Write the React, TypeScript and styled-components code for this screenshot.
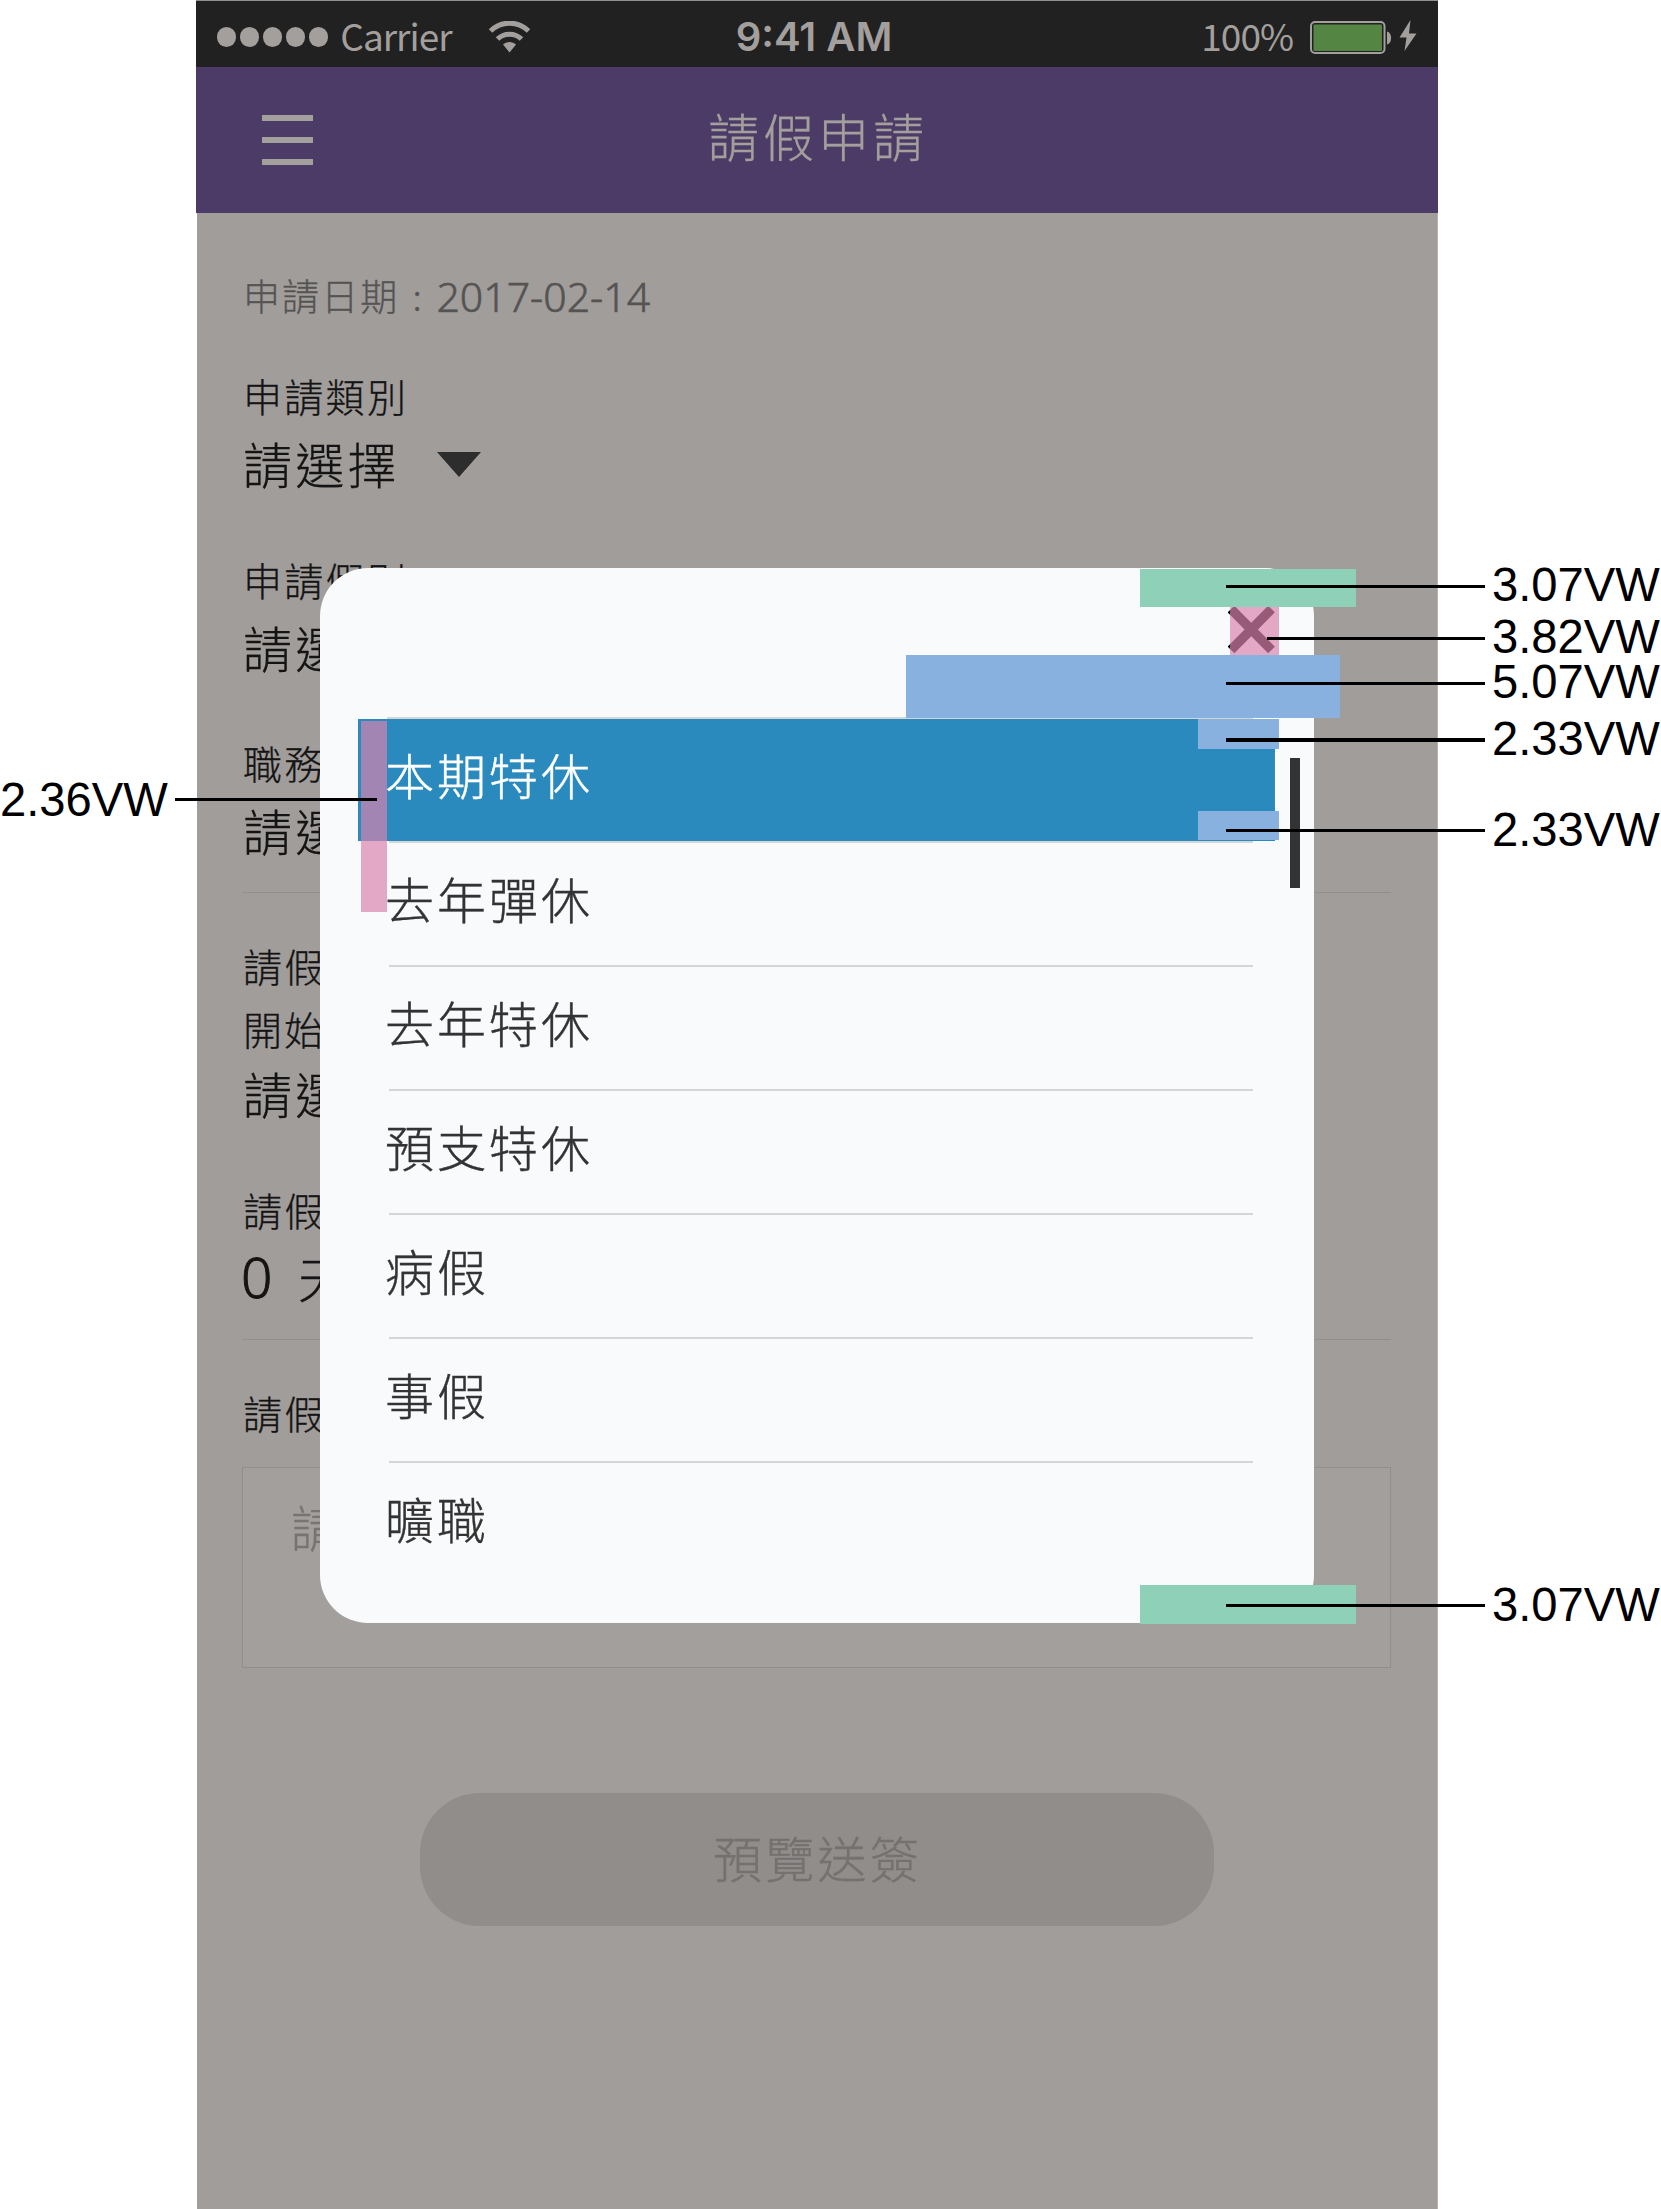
import React from 'react';
import styled, { createGlobalStyle } from 'styled-components';

const cjk = `'Noto Sans CJK TC', 'Noto Sans', sans-serif`;

const GlobalStyle = createGlobalStyle`
  *, *::before, *::after { box-sizing: border-box; }
  body { margin: 0; background: #fff; }
`;

const Board = styled.main`
  position: relative;
  width: 1661px;
  height: 2209px;
  overflow: hidden;
  padding-left: 196px;
  background: #fff;
  font-family: ${cjk};
  font-weight: 300;
`;

const Phone = styled.section`
  width: 1242px;
  height: 2209px;
  display: flex;
  flex-direction: column;
`;

const StatusBar = styled.header`
  height: 67px;
  flex: none;
  display: grid;
  grid-template-columns: 1fr auto 1fr;
  align-items: center;
  padding: 6px 21px 0;
  border-top: 1px solid #8f8f8f;
  background: #212121;
  color: #a39f9d;
  white-space: nowrap;
`;

const StatusGroup = styled.div<{ $end?: boolean }>`
  display: flex;
  align-items: center;
  justify-content: ${(p) => (p.$end ? 'flex-end' : 'flex-start')};
`;

const Signal = styled.div`
  display: flex;
  gap: 3.6px;
  margin-right: 12px;
`;

const Dot = styled.i`
  width: 19.4px;
  height: 19.4px;
  border-radius: 50%;
  background: #a39f9d;
`;

const Carrier = styled.span`
  font: 400 37px/48px ${cjk};
  letter-spacing: -1px;
  width: 148.5px;
  margin-bottom: 4px;
`;

const Clock = styled.span`
  font: 600 40px/48px Inter, sans-serif;
  letter-spacing: 0;
  margin-right: 6px;
`;

const Percent = styled.span`
  font: 400 37px/48px ${cjk};
  letter-spacing: -1px;
  margin: 0 17px 4px 0;
`;

const NavBar = styled.nav`
  height: 146px;
  flex: none;
  display: grid;
  grid-template-columns: 66px 1fr 66px;
  align-items: start;
  background: #4d3b67;
  color: #a39f9d;
`;

const Burger = styled.div`
  width: 51px;
  margin: 48px 0 0 66px;
  display: flex;
  flex-direction: column;
  gap: 16px;
`;

const BurgerBar = styled.i`
  height: 6px;
  background: #a39f9d;
`;

const Title = styled.h1`
  margin: 34px 0 0 2px;
  font-size: 51px;
  line-height: 68px;
  font-weight: 300;
  -webkit-text-stroke: 0.3px;
  letter-spacing: 4px;
  text-align: center;
`;

const Form = styled.div`
  flex: 1;
  margin-left: 1px;
  padding: 51px 46px 0 45px;
  border-right: 1px solid #b5b2b1;
  background: #a19d9b;
  color: #141414;
  -webkit-text-stroke: 0.3px;
  display: flex;
  flex-direction: column;
`;

const DateLine = styled.div`
  display: flex;
  height: 62px;
  padding-left: 1px;
  font-size: 37px;
  line-height: 62px;
  letter-spacing: 2.1px;
  color: #555453;
`;

const DateColon = styled.span`
  width: 37px;
  padding-left: 13px;
`;

const DateValue = styled.span`
  font: 300 41px/64px 'Noto Sans', sans-serif;
  -webkit-text-stroke: 0.6px;
  letter-spacing: 0;
`;

const Field = styled.div<{ $top: number }>`
  margin-top: ${(p) => p.$top}px;
  display: flex;
  flex-direction: column;
`;

const Label = styled.div`
  height: 62px;
  padding-left: 1px;
  font-size: 39px;
  line-height: 62px;
  letter-spacing: 2.3px;
  white-space: nowrap;
`;

const Value = styled.div<{ $h?: number }>`
  height: ${(p) => p.$h ?? 72}px;
  padding: 2px 0 0 1px;
  display: flex;
  align-items: center;
  font-size: 49px;
  line-height: ${(p) => (p.$h ?? 72) - 2}px;
  letter-spacing: 3.2px;
  white-space: nowrap;
`;

const Count = styled.span`
  width: 57px;
  margin-left: -2px;
  padding-right: 1px;
  font-family: 'Noto Sans', sans-serif;
  font-size: 55px;
  -webkit-text-stroke: 0.9px;
`;

const Caret = styled.i`
  margin: 3px 0 0 37px;
  border: 22px solid transparent;
  border-top: 25px solid #2d2d2d;
  border-bottom: 0;
`;

const Rule = styled.hr`
  width: 100%;
  height: 1px;
  flex: none;
  margin: 27px 0 0;
  border: 0;
  background: #928e8c;
`;

const Reason = styled.div`
  height: 201px;
  margin-top: 24px;
  padding: 22px 0 0 48px;
  border: 1px solid #928e8c;
  background: #a39f9d;
  color: #777473;
  font-size: 49px;
  line-height: 72px;
  letter-spacing: 3.2px;
`;

const Submit = styled.button`
  align-self: center;
  width: 794px;
  height: 133px;
  margin: 125px 0 0;
  padding: 0 0 6px 2px;
  border: 0;
  border-radius: 60px;
  background: #918d8b;
  color: #747270;
  font: 300 49px/72px ${cjk};
  -webkit-text-stroke: 0.4px;
  letter-spacing: 3.2px;
`;

const Modal = styled.section`
  position: absolute;
  left: 319.5px;
  top: 568px;
  width: 994px;
  height: 1055px;
  border-radius: 48px;
  background: #f9fafc;
  color: #333;
`;

const ModalHead = styled.div`
  height: 149px;
  display: flex;
  justify-content: flex-end;
  padding: 37px 37px 0 0;
`;

const List = styled.ul`
  margin: 0;
  padding: 0 38.5px;
  list-style: none;
`;

const Divider = styled.li<{ $first?: boolean }>`
  height: 2px;
  margin: 0 22px 0 ${(p) => (p.$first ? 29 : 31)}px;
  background: #d3d5d7;
`;

const Item = styled.li<{ $on?: boolean }>`
  height: 122px;
  padding: 19px 0 0 27px;
  font-size: 49px;
  line-height: 72px;
  letter-spacing: 3px;
  -webkit-text-stroke: 0.4px;
  background: ${(p) => (p.$on ? '#2a8abe' : 'transparent')};
  color: ${(p) => (p.$on ? '#fff' : '#333')};
`;

const Scrollbar = styled.i`
  position: absolute;
  left: 970.5px;
  top: 190px;
  width: 10px;
  height: 130px;
  background: #333;
`;

type Box = { x: number; y: number; w: number; h: number; c: string };

const Mark = styled.i<{ $b: Box }>`
  position: absolute;
  left: ${(p) => p.$b.x}px;
  top: ${(p) => p.$b.y}px;
  width: ${(p) => p.$b.w}px;
  height: ${(p) => p.$b.h}px;
  background: ${(p) => p.$b.c};
`;

const Callout = styled.div<{ $y: number; $x: number }>`
  position: absolute;
  left: ${(p) => p.$x}px;
  top: ${(p) => p.$y}px;
  display: flex;
  height: 42px;
  color: #000;
  font: 400 47.2px/42px 'Liberation Sans', Arial, sans-serif;
  white-space: nowrap;
`;

const Lead = styled.i<{ $w: number; $t: number; $thick?: boolean; $left?: number }>`
  width: ${(p) => p.$w}px;
  height: ${(p) => (p.$thick ? 4 : 3)}px;
  margin: ${(p) => p.$t}px 0 0 ${(p) => p.$left ?? 0}px;
  background: #000;
`;

const CalloutText = styled.span<{ $gap?: number }>`
  margin-left: ${(p) => p.$gap ?? 0}px;
`;

const green = '#8ed0b8';
const blue = '#88b1df';
const pink = 'rgba(218, 131, 175, 0.695)';

const marks: Box[] = [
  { x: 1140, y: 569, w: 216, h: 38, c: green },
  { x: 1230, y: 607, w: 49, h: 48, c: pink },
  { x: 906, y: 655, w: 434, h: 63, c: blue },
  { x: 1198, y: 719, w: 81, h: 30, c: blue },
  { x: 1198, y: 811, w: 81, h: 29, c: blue },
  { x: 361, y: 721, w: 26, h: 191, c: pink },
  { x: 1140, y: 1585, w: 216, h: 39, c: green },
];

// y is the top of the 42px text line; line is the top of the leader.
const callouts = [
  { y: 564, x: 1226, line: 585, text: '3.07VW' },
  { y: 616, x: 1267, line: 637, text: '3.82VW' },
  { y: 661, x: 1226, line: 682, text: '5.07VW' },
  { y: 718, x: 1226, line: 738, text: '2.33VW', thick: true },
  { y: 809, x: 1226, line: 829, text: '2.33VW' },
  { y: 1584, x: 1226, line: 1604, text: '3.07VW' },
];

const leaves = ['本期特休', '去年彈休', '去年特休', '預支特休', '病假', '事假', '曠職'];

const Wifi = () => (
  <svg width="41" height="32" viewBox="0 0 41 32" fill="none" stroke="#a39f9d">
    <path d="M1.500 10C12-.5 29-.5 39.500 10" strokeWidth="5" />
    <path d="M8.500 18C15 11.500 26 11.500 32.500 18" strokeWidth="5" />
    <path d="M20.500 31.500L14 23.500C17.500 20 23.500 20 27 23.500Z" fill="#a39f9d" stroke="none" />
  </svg>
);

const Battery = () => (
  <svg width="107" height="36" viewBox="0 0 107 36" fill="none">
    <rect x="1" y="3" width="73.500" height="31" rx="4" stroke="#a39f9d" strokeWidth="2" />
    <rect x="3.500" y="5.500" width="68.500" height="26.500" rx="1" fill="#548542" />
    <path d="M77 12.500C82.500 13.500 82.500 24.500 77 25.500Z" fill="#a39f9d" />
    <path d="M100.500 1L89.500 18.500H96.500L94.500 32L106.500 14.500H99Z" fill="#a39f9d" />
  </svg>
);

const CloseIcon = () => (
  <svg width="49" height="49" viewBox="0 0 49 49" stroke="#000" strokeWidth="9.500">
    <path d="M3 4L43.500 45M43.500 4L3 45" />
  </svg>
);

export default function App() {
  return (
    <>
      <GlobalStyle />
      <Board>
        <Phone>
          <StatusBar>
            <StatusGroup>
              <Signal>
                {[0, 1, 2, 3, 4].map((i) => (
                  <Dot key={i} />
                ))}
              </Signal>
              <Carrier>Carrier</Carrier>
              <Wifi />
            </StatusGroup>
            <Clock>9:41 AM</Clock>
            <StatusGroup $end>
              <Percent>100%</Percent>
              <Battery />
            </StatusGroup>
          </StatusBar>
          <NavBar>
            <Burger>
              <BurgerBar />
              <BurgerBar />
              <BurgerBar />
            </Burger>
            <Title>請假申請</Title>
          </NavBar>
          <Form>
            <DateLine>
              申請日期<DateColon>:</DateColon>
              <DateValue>2017-02-14</DateValue>
            </DateLine>
            <Field $top={38}>
              <Label>申請類別</Label>
              <Value>
                請選擇
                <Caret />
              </Value>
            </Field>
            <Field $top={50}>
              <Label>申請假別</Label>
              <Value>請選擇</Value>
            </Field>
            <Field $top={49}>
              <Label>職務代理</Label>
              <Value>請選擇</Value>
            </Field>
            <Rule />
            <Field $top={41}>
              <Label>請假時間</Label>
            </Field>
            <Field $top={1}>
              <Label>開始時間</Label>
              <Value $h={66}>請選擇</Value>
            </Field>
            <Field $top={53}>
              <Label>請假天數</Label>
              <Value>
                <Count>0</Count>天
              </Value>
            </Field>
            <Rule />
            <Field $top={41}>
              <Label>請假事由</Label>
            </Field>
            <Reason>請輸入</Reason>
            <Submit>預覽送簽</Submit>
          </Form>
        </Phone>

        <Modal>
          <ModalHead>
            <CloseIcon />
          </ModalHead>
          <List>
            <Divider $first />
            {leaves.map((name, i) => (
              <React.Fragment key={name}>
                {i > 0 && <Divider />}
                <Item $on={i === 0}>{name}</Item>
              </React.Fragment>
            ))}
          </List>
          <Scrollbar />
        </Modal>

        {marks.map((b, i) => (
          <Mark key={i} $b={b} />
        ))}
        {callouts.map((c) => (
          <Callout key={c.y} $x={c.x} $y={c.y}>
            <Lead $w={1485 - c.x} $t={c.line - c.y} $thick={c.thick} />
            <CalloutText $gap={7}>{c.text}</CalloutText>
          </Callout>
        ))}
        <Callout $x={0} $y={779}>
          <CalloutText>2.36VW</CalloutText>
          <Lead $w={202} $t={19} $left={7} />
        </Callout>
      </Board>
    </>
  );
}
